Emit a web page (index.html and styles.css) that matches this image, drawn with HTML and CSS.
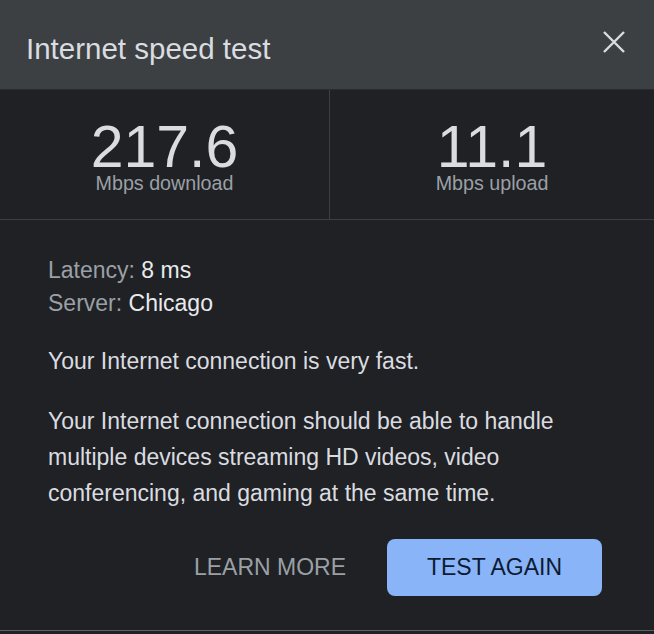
FILE: index.html
```html
<!DOCTYPE html>
<html>
<head>
<meta charset="utf-8">
<link rel="stylesheet" href="styles.css">
</head>
<body>
<div class="dialog">
  <header class="head">
    <h1 class="title">Internet speed test</h1>
    <button class="close" aria-label="Close">
      <svg width="26" height="26" viewBox="0 0 26 26"><path d="M3 3 L23 23 M23 3 L3 23" stroke="#dadce0" stroke-width="2.4" fill="none"/></svg>
    </button>
  </header>
  <section class="stats">
    <div class="stat">
      <div class="num">217.6</div>
      <div class="unit">Mbps download</div>
    </div>
    <div class="stat">
      <div class="num">11.1</div>
      <div class="unit">Mbps upload</div>
    </div>
  </section>
  <section class="body">
    <div class="meta">
      <div><span class="lbl">Latency:</span> 8 ms</div>
      <div><span class="lbl">Server:</span> Chicago</div>
    </div>
    <p class="fast">Your Internet connection is very fast.</p>
    <p class="desc">Your Internet connection should be able to handle multiple devices streaming HD videos, video conferencing, and gaming at the same time.</p>
    <div class="actions">
      <button class="learn">LEARN MORE</button>
      <button class="again">TEST AGAIN</button>
    </div>
  </section>
</div>
</body>
</html>
```
FILE: styles.css
```css
* { box-sizing: border-box; }
html, body { margin: 0; padding: 0; background: #202124; }
body { font-family: "Liberation Sans", Arial, sans-serif; width: 654px; height: 634px; overflow: hidden; }
.dialog { width: 654px; height: 631px; border-bottom: 1px solid #5f6368; background: #202124; display: flex; flex-direction: column; }
.head { height: 90px; flex: none; background: #3c4043; border-bottom: 1px solid #2a2b2e; display: flex; align-items: center; justify-content: space-between; padding: 0 27px 0 26px; }
.title { margin: 0; font-weight: normal; font-size: 29.5px; line-height: 34px; color: #dadce0; transform: translateY(4px); }
.close { background: none; border: 0; padding: 0; margin-top: -6px; display: flex; }
.stats { height: 130px; flex: none; display: grid; grid-template-columns: 329px 1fr; border-bottom: 1px solid #3c4043; }
.stat { display: flex; flex-direction: column; align-items: center; padding-top: 33px; }
.stat + .stat { border-left: 1px solid #3c4043; }
.num { font-size: 59px; line-height: 48px; color: #dadce0; }
.unit { font-size: 19.7px; line-height: 24px; color: #9aa0a6; }
.body { padding: 34px 48px 0 48px; color: #dadce0; font-size: 23px; }
.meta { line-height: 33px; color: #e8eaed; }
.lbl { color: #9aa0a6; }
.fast { margin: 24.5px 0 0; line-height: 32px; }
.desc { margin: 26px 0 0; line-height: 36px; }
.actions { display: flex; justify-content: flex-end; align-items: center; margin-top: 28.5px; padding-right: 4px; }
.learn { background: none; border: 0; color: #9aa0a6; font: inherit; font-size: 23px; padding: 0; margin-right: 41px; }
.again { background: #8ab4f8; border: 0; border-radius: 8px; width: 215px; height: 57px; color: #0d1a33; font: inherit; font-size: 23px; }
```
